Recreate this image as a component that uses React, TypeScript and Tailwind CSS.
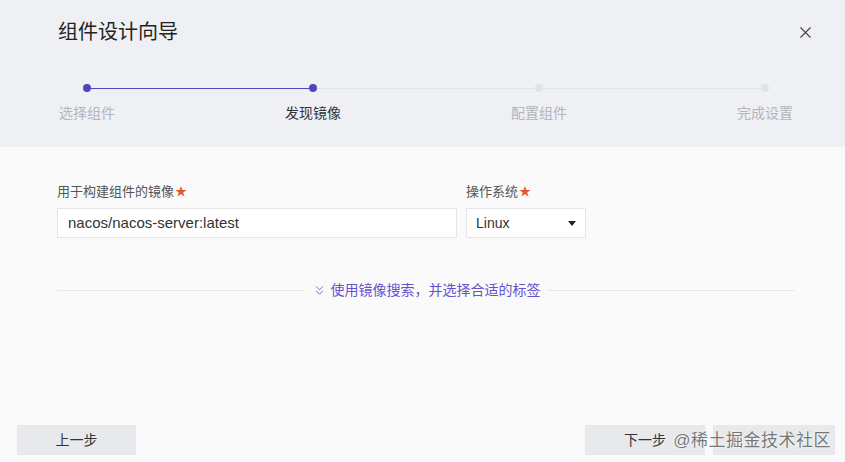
import { ChevronsDown, X } from 'lucide-react'

const steps = [
  { label: '选择组件', done: true },
  { label: '发现镜像', done: true, current: true },
  { label: '配置组件', done: false },
  { label: '完成设置', done: false },
]

function Required() {
  return <span className="ml-[1px] text-[12px] leading-none text-[#e4572e]">★</span>
}

export default function App() {
  return (
    <div
      className="relative flex h-[462px] w-[845px] flex-col overflow-hidden bg-[#fafafa]"
      style={{ fontFamily: '"Liberation Sans", "Noto Sans CJK SC", sans-serif' }}
    >
      {/* header */}
      <div className="h-[147px] bg-[#eff0f3]">
        <div className="flex items-center justify-between pl-[58px] pr-[30px] pt-[18px]">
          <h1 className="text-[20px] leading-[28px] text-[#222]">组件设计向导</h1>
          <X className="h-[19px] w-[19px] text-[#444]" strokeWidth={1.4} />
        </div>

        <div className="mt-[38px] flex items-center pl-[83px] pr-[76px]">
          {steps.map((s, i) => (
            <div key={s.label} className={i < steps.length - 1 ? 'flex flex-1 items-center' : 'flex items-center'}>
              <span className={`h-[8px] w-[8px] rounded-full ${s.done ? 'bg-[#5443c0]' : 'bg-[#e2e3e7]'}`} />
              {i < steps.length - 1 && (
                <span className={`h-px flex-1 ${steps[i + 1].done ? 'bg-[#5443c0]' : 'bg-[#e2e3e7]'}`} />
              )}
            </div>
          ))}
        </div>

        <div className="mt-[11px] flex justify-between pl-[47px] pr-[40px]">
          {steps.map((s) => (
            <span
              key={s.label}
              className={`w-[80px] text-center text-[14px] leading-[20px] ${s.current ? 'text-[#333]' : 'text-[#b3b5bb]'}`}
            >
              {s.label}
            </span>
          ))}
        </div>
      </div>

      {/* form */}
      <div className="flex flex-1 flex-col px-[57px] pt-[36px]">
        <div className="flex gap-[9px]">
          <div className="flex w-[400px] flex-col gap-[7px]">
            <label className="flex items-center text-[13px] leading-[18px] text-[#555]">
              用于构建组件的镜像<Required />
            </label>
            <div className="flex h-[30px] items-center border border-[#e6e6e8] bg-white px-[10px] text-[15px] text-[#333]">
              nacos/nacos-server:latest
            </div>
          </div>
          <div className="flex w-[120px] flex-col gap-[7px]">
            <label className="flex items-center text-[13px] leading-[18px] text-[#555]">
              操作系统<Required />
            </label>
            <div className="flex h-[30px] items-center justify-between border border-[#e6e6e8] bg-white pl-[9px] pr-[9px] text-[14px] text-[#333]">
              Linux
              <span className="h-0 w-0 border-x-[4.5px] border-t-[5px] border-x-transparent border-t-[#222]" />
            </div>
          </div>
        </div>

        <div className="mr-[-7px] mt-[43px] flex items-center gap-[7px]">
          <span className="h-px flex-1 bg-[#e8e8ea]" />
          <span className="flex items-center gap-[4px] text-[14px] leading-[18px] text-[#6652cf]">
            <ChevronsDown className="h-[15px] w-[15px]" strokeWidth={1.4} />
            使用镜像搜索，并选择合适的标签
          </span>
          <span className="h-px flex-1 bg-[#e8e8ea]" />
        </div>
      </div>

      {/* footer */}
      <div className="flex items-center justify-between pb-[7px] pl-[17px] pr-[10px]">
        <button className="h-[30px] w-[119px] bg-[#e8e9ec] text-[14px] text-[#333]">上一步</button>
        <div className="flex gap-[8px]">
          <button className="h-[30px] w-[120px] bg-[#e8e9ec] text-[14px] text-[#333]">下一步</button>
          <button className="h-[30px] w-[122px] bg-[#e8e9ec] text-[14px] text-[#333]" />
        </div>
      </div>

      {/* watermark */}
      <div className="pointer-events-none absolute bottom-[10px] right-[14px] flex flex-col items-end">
        <span
          className="text-[17px] leading-[22px] tracking-[0.5px] text-[#777]"
          style={{ textShadow: '0 0 1px #fff, 0 0 2px #fff' }}
        >
          @稀土掘金技术社区
        </span>
      </div>
    </div>
  )
}
